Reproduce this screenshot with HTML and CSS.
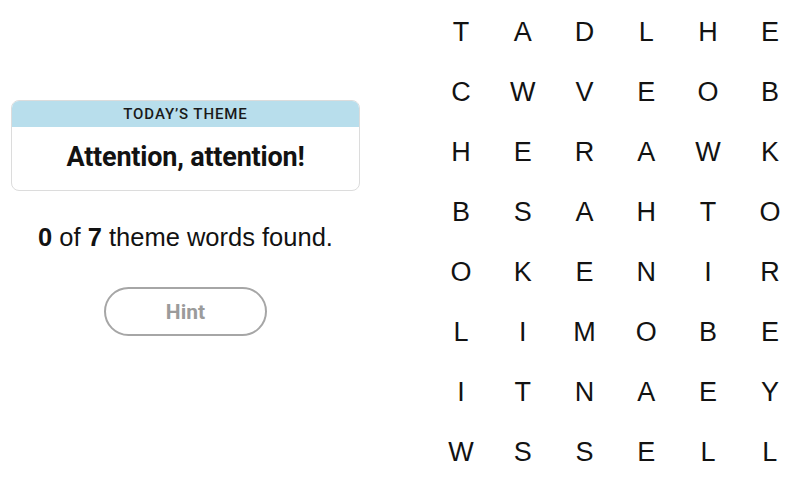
FILE: index.html
```html
<!DOCTYPE html>
<html>
<head>
<meta charset="utf-8">
<link rel="stylesheet" href="styles.css">
</head>
<body>
<div class="page">
  <div class="side">
    <div class="theme-card">
      <div class="theme-head">TODAY’S THEME</div>
      <div class="theme-body">Attention, attention!</div>
    </div>
    <p class="progress"><b>0</b> of <b>7</b> theme words found.</p>
    <button class="hint">Hint</button>
  </div>
  <div class="board">
    <span>T</span><span>A</span><span>D</span><span>L</span><span>H</span><span>E</span>
    <span>C</span><span>W</span><span>V</span><span>E</span><span>O</span><span>B</span>
    <span>H</span><span>E</span><span>R</span><span>A</span><span>W</span><span>K</span>
    <span>B</span><span>S</span><span>A</span><span>H</span><span>T</span><span>O</span>
    <span>O</span><span>K</span><span>E</span><span>N</span><span>I</span><span>R</span>
    <span>L</span><span>I</span><span>M</span><span>O</span><span>B</span><span>E</span>
    <span>I</span><span>T</span><span>N</span><span>A</span><span>E</span><span>Y</span>
    <span>W</span><span>S</span><span>S</span><span>E</span><span>L</span><span>L</span>
  </div>
</div>
</body>
</html>
```

FILE: styles.css
```css
html, body {
  margin: 0;
  padding: 0;
  background: #fff;
  overflow: hidden;
}
body {
  width: 800px;
  height: 494px;
  font-family: "Liberation Sans", Arial, sans-serif;
  color: #121212;
}
.page {
  display: flex;
  flex-direction: row;
}
.side {
  width: 349px;
  padding: 100px 11px 0 11px;
  margin-right: 59px;
  display: flex;
  flex-direction: column;
  align-items: center;
}
.theme-card {
  width: 347px;
  border: 1px solid #dcdcdc;
  border-radius: 8px;
  overflow: hidden;
}
.theme-head {
  height: 26px;
  background: #b8deec;
  font-family: Roboto, "Liberation Sans", sans-serif;
  font-weight: 500;
  font-size: 15px;
  letter-spacing: 0.9px;
  line-height: 27px;
  text-align: center;
  color: #1a1a1a;
}
.theme-body {
  height: 63px;
  line-height: 60px;
  text-align: center;
  font-family: Roboto, "Liberation Sans", sans-serif;
  font-weight: 700;
  font-size: 27px;
  letter-spacing: -0.2px;
  color: #121212;
}
.progress {
  margin: 31px 0 0 0;
  font-size: 25.5px;
  line-height: 30px;
  color: #121212;
}
.progress b {
  font-weight: 700;
}
.hint {
  margin-top: 35px;
  width: 163px;
  height: 49px;
  border: 2px solid #a6a6a6;
  border-radius: 25px;
  background: #fff;
  font-family: Roboto, "Liberation Sans", sans-serif;
  font-weight: 700;
  font-size: 21px;
  color: #9b9b9b;
  padding: 0;
}
.board {
  margin-top: 2px;
  display: grid;
  grid-template-columns: repeat(6, 61.8px);
  grid-auto-rows: 60px;
}
.board span {
  display: flex;
  align-items: center;
  justify-content: center;
  font-size: 27px;
  color: #121212;
}
```
